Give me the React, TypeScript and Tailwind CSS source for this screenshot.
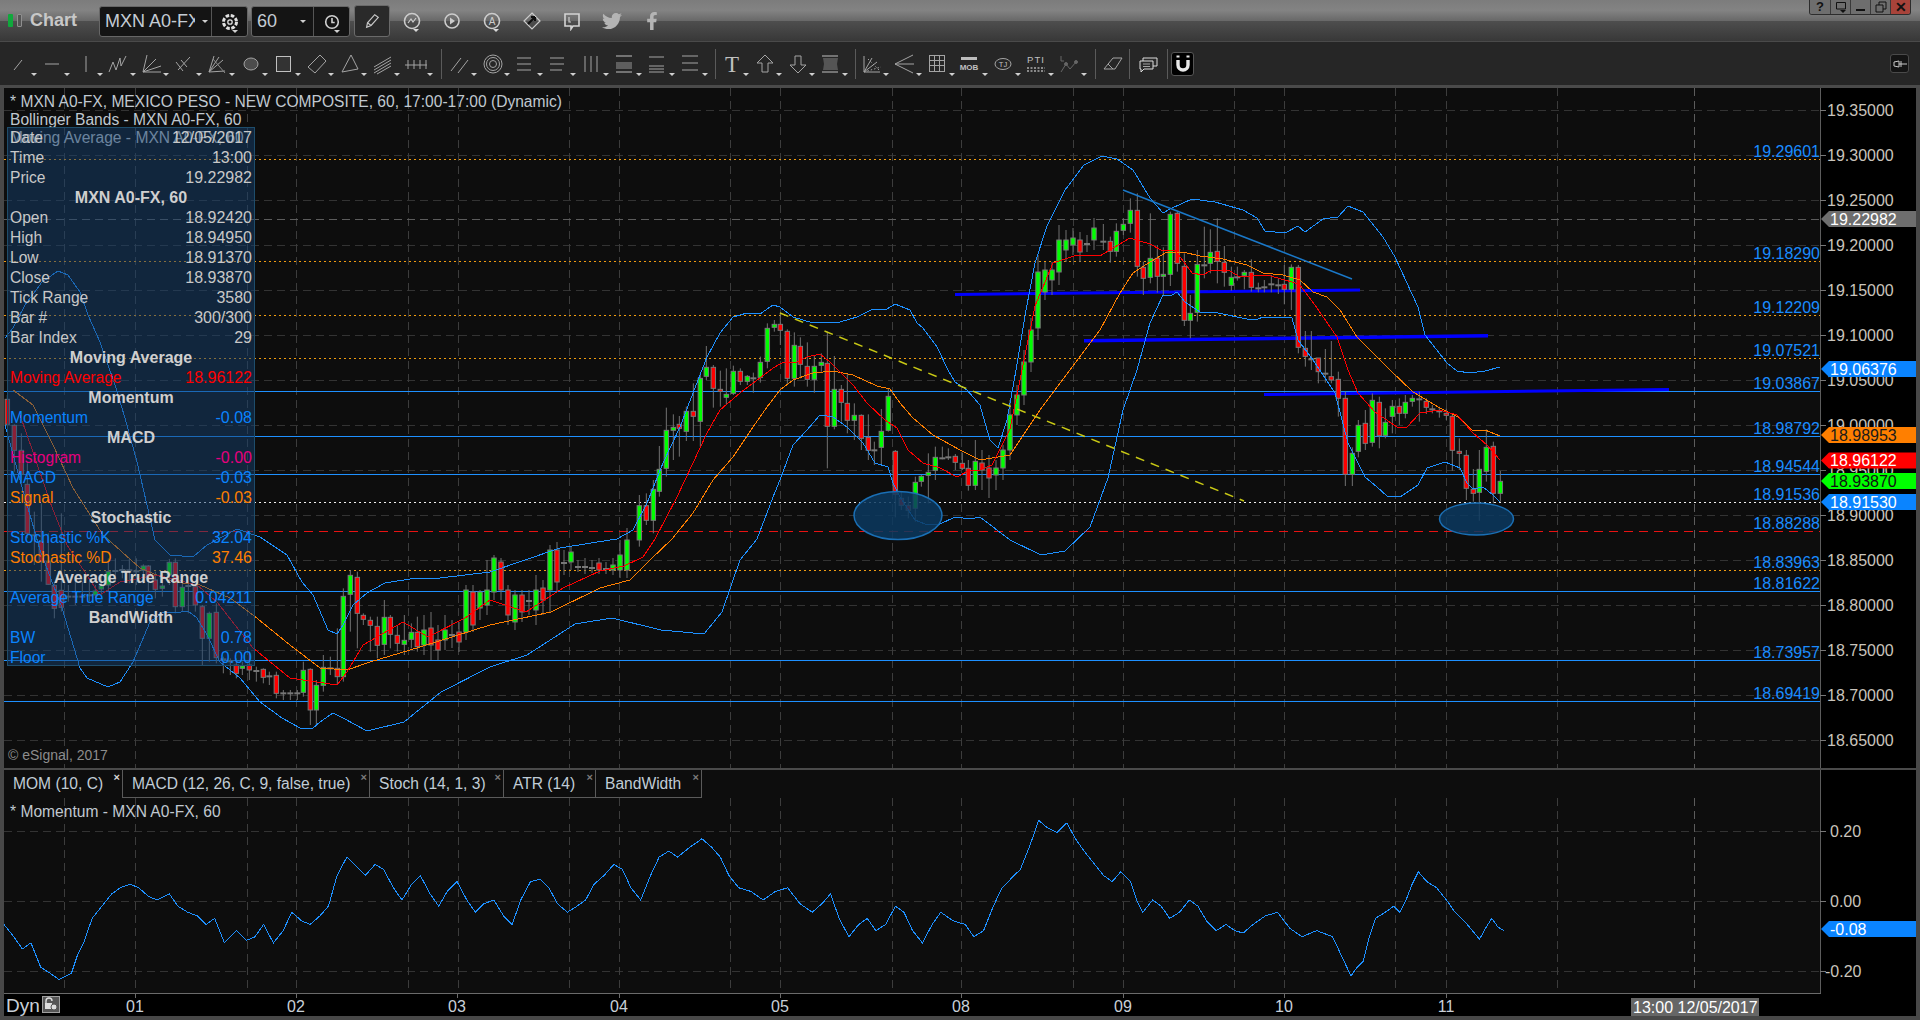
import React from 'react';
import { FaTwitter, FaFacebookF } from 'react-icons/fa';

type Bar = [number, number, number, number, number, string];

// rows are read off zoomed crops, so they get scaled back to page coordinates
const fromCrop = (ox: number, oy: number, rows: Bar[]): Bar[] =>
  rows.map(([x, t, b, wt, wb, k]) => [ox + x / 3, oy + t / 3, oy + b / 3, oy + wt / 3, oy + wb / 3, k]);

const leftBars = fromCrop(0, 385, [
  [22, 43, 118, 30, 125, 'r'], [43, 121, 196, 118, 260, 'r'], [64, 196, 268, 145, 300, 'r'], [82, 298, 445, 235, 460, 'r'],
  [103, 448, 451, 380, 540, 'd'], [124, 470, 530, 355, 590, 'r'], [145, 530, 598, 445, 600, 'r'], [163, 601, 670, 590, 700, 'r'],
  [184, 616, 667, 385, 680, 'r'], [205, 632, 635, 600, 650, 'd'], [226, 632, 635, 590, 660, 'd'], [247, 632, 635, 590, 650, 'd'],
  [268, 628, 631, 590, 650, 'd'], [286, 618, 630, 600, 640, 'g'], [304, 603, 612, 570, 630, 'g'], [325, 560, 600, 520, 620, 'g'],
  [346, 555, 558, 520, 590, 'd'], [367, 552, 555, 540, 580, 'd'], [388, 553, 556, 520, 595, 'd'], [409, 556, 559, 520, 600, 'd'],
  [430, 543, 556, 538, 595, 'g'], [445, 543, 575, 540, 620, 'r'], [466, 585, 613, 560, 640, 'r'], [487, 603, 610, 575, 635, 'g'],
  [508, 532, 570, 522, 600, 'g'], [526, 532, 665, 520, 685, 'r'], [547, 607, 665, 580, 680, 'g'], [565, 600, 603, 590, 685, 'd'],
  [586, 605, 660, 595, 680, 'r'], [607, 665, 760, 660, 840, 'r'], [628, 685, 760, 680, 830, 'g'], [649, 682, 818, 655, 835, 'r'],
  [670, 820, 823, 815, 865, 'd'], [691, 826, 830, 820, 870, 'd'], [709, 840, 865, 820, 880, 'r'], [727, 843, 850, 830, 870, 'g'],
  [748, 840, 855, 800, 885, 'r'], [769, 855, 858, 845, 890, 'd'], [790, 853, 877, 850, 895, 'r'], [808, 871, 874, 860, 900, 'd'],
  [829, 871, 925, 860, 940, 'r'], [850, 922, 925, 915, 945, 'd'], [871, 922, 925, 915, 945, 'd'], [892, 922, 925, 915, 945, 'd'],
  [910, 856, 922, 830, 935, 'g'], [931, 853, 975, 850, 1020, 'r'], [949, 901, 975, 885, 1020, 'g'], [970, 847, 901, 810, 920, 'g'],
  [991, 847, 850, 815, 870, 'd'], [1012, 850, 875, 730, 900, 'r'], [1030, 634, 875, 610, 890, 'g'], [1051, 571, 628, 555, 740, 'g'],
  [1072, 577, 685, 560, 790, 'r'], [1090, 691, 703, 685, 720, 'r'], [1111, 706, 721, 695, 800, 'r'], [1132, 724, 781, 695, 820, 'r'],
  [1153, 697, 778, 645, 810, 'g'], [1171, 697, 748, 690, 790, 'r'], [1192, 751, 775, 720, 800, 'r'], [1213, 766, 778, 690, 810, 'g'],
  [1234, 742, 763, 715, 790, 'g'], [1252, 742, 785, 695, 800, 'r'],
]);

const week1Bars: Bar[] = [
  [424, 630, 645, 615, 655, 'g'], [431, 628, 645, 612, 660, 'r'], [438, 640, 650, 625, 660, 'r'], [445, 630, 640, 615, 650, 'g'],
  [452, 634, 636, 620, 648, 'd'], [459, 632, 642, 622, 652, 'r'], [466, 590, 632, 585, 640, 'g'], [473, 592, 625, 585, 632, 'r'],
  [480, 592, 608, 590, 620, 'g'], [487, 590, 605, 560, 615, 'g'], [494, 558, 592, 555, 600, 'g'], [501, 562, 590, 558, 600, 'r'],
  [508, 590, 615, 585, 625, 'r'], [515, 595, 622, 590, 630, 'g'], [522, 595, 612, 590, 622, 'r'], [529, 600, 602, 590, 615, 'd'],
  [536, 590, 610, 575, 625, 'g'], [543, 588, 600, 580, 615, 'r'], [550, 550, 590, 545, 612, 'g'], [557, 550, 582, 542, 592, 'r'],
  [564, 562, 564, 550, 575, 'd'], [571, 552, 562, 546, 570, 'g'], [578, 566, 568, 560, 572, 'd'], [585, 566, 568, 558, 574, 'd'],
  [592, 567, 569, 560, 573, 'd'], [599, 563, 570, 558, 574, 'r'], [606, 568, 570, 562, 574, 'd'], [613, 565, 570, 558, 575, 'g'],
  [620, 555, 570, 540, 578, 'g'], [627, 540, 570, 528, 578, 'g'],
];

const midBars = fromCrop(560, 300, [
  [238, 617, 720, 585, 740, 'g'], [259, 617, 661, 580, 675, 'r'], [280, 568, 661, 540, 700, 'g'], [298, 508, 574, 438, 590, 'g'],
  [319, 391, 505, 323, 530, 'g'], [340, 382, 391, 343, 480, 'g'], [358, 373, 385, 348, 470, 'r'], [379, 334, 394, 320, 423, 'g'],
  [400, 334, 349, 250, 423, 'r'], [421, 235, 364, 220, 440, 'g'], [439, 202, 229, 138, 240, 'g'], [460, 202, 265, 195, 323, 'r'],
  [481, 268, 274, 212, 320, 'r'], [499, 283, 292, 205, 315, 'g'], [520, 214, 280, 197, 285, 'g'], [541, 214, 244, 205, 255, 'r'],
  [562, 229, 244, 225, 255, 'g'], [580, 232, 235, 218, 278, 'd'], [601, 187, 232, 170, 248, 'g'], [622, 85, 184, 70, 205, 'g'],
  [643, 73, 82, 60, 95, 'g'], [661, 73, 91, 38, 135, 'r'], [682, 94, 235, 88, 255, 'r'], [703, 136, 235, 97, 260, 'g'],
  [721, 139, 193, 112, 235, 'r'], [742, 199, 238, 127, 260, 'r'], [763, 199, 238, 165, 278, 'g'], [784, 187, 196, 160, 215, 'g'],
  [802, 190, 379, 95, 505, 'r'], [823, 268, 379, 168, 388, 'g'], [844, 268, 307, 255, 365, 'r'], [862, 310, 361, 220, 400, 'r'],
  [883, 346, 361, 310, 420, 'g'], [904, 346, 415, 343, 450, 'r'], [925, 412, 451, 343, 480, 'r'], [943, 448, 451, 425, 495, 'd'],
  [964, 394, 442, 327, 495, 'g'], [985, 289, 391, 265, 395, 'g'], [1006, 454, 583, 450, 652, 'r'], [1024, 595, 616, 575, 630, 'r'],
  [1045, 616, 631, 590, 655, 'r'], [1066, 547, 625, 530, 665, 'g'], [1084, 529, 544, 525, 560, 'g'], [1105, 517, 526, 460, 610, 'g'],
  [1126, 472, 511, 440, 540, 'g'], [1147, 472, 475, 440, 478, 'd'], [1165, 469, 472, 445, 480, 'd'], [1186, 469, 487, 462, 510, 'r'],
  [1207, 490, 505, 458, 510, 'r'], [1225, 505, 556, 480, 572, 'r'], [1246, 484, 556, 420, 570, 'g'],
]);

const riseBars: Bar[] = [
  [982, 463, 470, 450, 490, 'r'], [989, 468, 478, 455, 498, 'r'], [996, 468, 475, 460, 490, 'g'], [1003, 450, 468, 445, 480, 'g'],
  [1010, 415, 450, 400, 460, 'g'], [1017, 395, 415, 385, 425, 'g'], [1024, 362, 395, 350, 405, 'g'], [1031, 330, 362, 318, 372, 'g'],
  [1038, 272, 328, 255, 340, 'g'], [1045, 270, 292, 262, 300, 'g'], [1052, 270, 280, 262, 295, 'g'], [1059, 240, 272, 225, 285, 'g'],
  [1066, 240, 250, 230, 262, 'g'], [1073, 238, 245, 228, 255, 'g'], [1080, 240, 252, 232, 262, 'r'], [1087, 243, 245, 235, 252, 'd'],
  [1094, 228, 240, 218, 250, 'g'],
];

const lateBars = fromCrop(1100, 170, [
  [10, 212, 215, 162, 240, 'd'], [31, 214, 244, 200, 278, 'r'], [49, 184, 244, 160, 260, 'g'], [70, 163, 181, 145, 195, 'g'],
  [91, 121, 160, 85, 188, 'g'], [112, 121, 289, 70, 320, 'r'], [130, 292, 325, 275, 375, 'r'], [151, 265, 322, 130, 340, 'g'],
  [172, 265, 319, 225, 368, 'r'], [190, 313, 319, 232, 378, 'g'], [211, 133, 313, 125, 348, 'g'], [232, 130, 280, 125, 305, 'r'],
  [253, 289, 451, 250, 468, 'r'], [271, 430, 451, 375, 505, 'g'], [292, 283, 427, 240, 455, 'g'], [313, 283, 286, 170, 325, 'd'],
  [331, 247, 280, 178, 310, 'g'], [352, 244, 274, 145, 340, 'r'], [373, 277, 307, 228, 350, 'r'], [394, 322, 346, 290, 362, 'g'],
  [412, 319, 321, 290, 332, 'd'], [433, 307, 316, 300, 358, 'g'], [454, 307, 352, 268, 365, 'r'], [475, 352, 355, 338, 367, 'd'],
  [493, 349, 352, 330, 367, 'd'], [514, 340, 343, 315, 367, 'd'], [535, 343, 346, 325, 372, 'd'], [553, 343, 358, 285, 403, 'r'],
  [574, 292, 358, 283, 420, 'g'], [595, 292, 532, 285, 550, 'r'], [616, 535, 559, 483, 590, 'r'], [634, 565, 568, 483, 600, 'd'],
]);

const endBars = fromCrop(1300, 370, [
  [55, -36, 5, -36, 40, 'r'], [76, 8, 11, -63, 38, 'd'], [94, 20, 30, -87, 40, 'r'], [115, 28, 85, 5, 140, 'r'],
  [136, 85, 313, 65, 348, 'r'], [157, 250, 313, 232, 348, 'g'], [175, 166, 244, 150, 262, 'g'], [196, 160, 220, 120, 240, 'r'],
  [217, 91, 217, 70, 230, 'g'], [238, 97, 197, 80, 235, 'r'], [256, 157, 196, 115, 205, 'g'], [277, 109, 139, 90, 190, 'g'],
  [298, 109, 130, 85, 165, 'r'], [316, 97, 130, 75, 145, 'g'], [337, 85, 94, 75, 110, 'g'], [358, 85, 88, 65, 155, 'd'],
  [379, 94, 112, 85, 132, 'r'], [397, 115, 118, 105, 130, 'd'], [418, 121, 124, 110, 143, 'd'], [439, 130, 136, 115, 150, 'r'],
  [457, 139, 241, 130, 302, 'r'], [478, 244, 250, 205, 300, 'r'], [499, 256, 355, 240, 390, 'r'], [520, 358, 370, 297, 395, 'r'],
  [538, 298, 367, 240, 452, 'g'], [559, 232, 304, 178, 335, 'g'], [580, 229, 370, 215, 400, 'r'], [601, 334, 370, 303, 395, 'g'],
]);

const bars = [...leftBars, ...week1Bars, ...midBars, ...riseBars, ...lateBars, ...endBars];

const upperBand = '5,338 13,328 25,305 42,282 58,271 68,275 80,292 88,315 100,342 115,385 125,418 137,462 147,505 155,540 170,555 193,557 207,545 237,529 260,537 287,555 302,582 313,595 328,630 337,634 343,625 353,605 367,593 385,583 410,579 440,578 490,572 560,548 610,540 617,539 633,530 647,503 663,463 680,427 693,393 707,357 720,333 733,317 747,313 760,314 773,305 780,307 793,317 813,323 840,322 857,317 873,309 887,309 895,304 910,310 917,323 923,328 937,347 948,370 955,382 967,390 980,405 990,440 998,448 1007,420 1016,370 1026,310 1035,263 1047,226 1065,190 1084,165 1102,156 1117,159 1133,170 1150,198 1163,213 1172,208 1192,199 1215,202 1243,210 1257,218 1265,231 1285,233 1298,226 1305,232 1323,219 1338,217 1348,206 1363,212 1383,237 1395,257 1418,307 1425,335 1447,363 1457,371 1470,373 1485,371 1500,367';
const lowerBand = '5,425 20,480 40,550 62,608 80,668 87,678 108,687 120,682 133,662 150,622 163,612 175,613 188,611 197,618 207,635 220,662 240,678 260,702 282,718 300,728 312,729 320,722 333,713 343,718 367,731 404,722 441,692 490,667 527,655 575,624 612,618 661,630 704,634 722,612 740,560 757,539 767,513 773,497 780,480 793,445 807,430 820,415 833,417 847,427 863,443 875,463 888,467 893,483 900,497 915,520 925,524 940,524 955,517 970,519 980,517 1010,540 1041,555 1065,551 1090,527 1108,478 1123,410 1137,370 1150,323 1163,295 1172,295 1177,292 1185,302 1200,312 1218,313 1247,319 1258,319 1263,317 1292,318 1298,340 1313,360 1335,393 1342,420 1348,443 1365,477 1377,487 1387,496 1400,497 1418,485 1427,468 1445,462 1460,468 1467,483 1473,489 1483,487 1493,495 1500,502';
const redMa = '20,415 33,452 50,502 67,545 100,595 120,582 157,575 197,585 217,602 253,648 290,678 337,685 347,672 363,645 403,622 428,637 465,618 490,600 526,612 563,588 600,571 624,566 643,557 655,539 677,497 693,463 707,433 720,410 740,393 760,378 773,368 782,363 797,362 807,357 820,354 830,362 843,375 853,385 867,403 885,420 897,428 908,450 923,463 940,468 957,477 970,470 980,470 992,465 1010,429 1035,306 1053,263 1077,255 1100,256 1130,238 1150,244 1163,251 1175,250 1192,273 1203,275 1212,270 1230,271 1240,277 1267,275 1292,282 1300,285 1317,308 1337,337 1348,370 1358,393 1375,412 1397,427 1407,427 1420,413 1440,410 1457,415 1473,433 1487,445 1500,460';
const orangeMa = '13,390 33,405 53,445 73,488 103,535 140,568 173,582 200,585 230,598 253,615 290,645 320,668 347,670 370,662 420,647 490,625 551,612 600,588 630,580 650,560 672,539 693,513 713,480 733,457 753,427 767,407 780,390 793,380 813,373 833,371 853,375 877,386 890,389 900,403 913,418 933,435 960,450 980,460 1010,455 1040,410 1070,370 1100,330 1120,293 1133,273 1150,262 1167,252 1183,252 1200,256 1223,259 1247,265 1263,273 1283,275 1300,280 1313,292 1327,297 1340,310 1357,337 1390,370 1413,392 1440,408 1460,418 1472,430 1485,430 1500,436';

const momentum = [[0,755],[8,765],[15,775],[22,770],[30,790],[38,795],[45,800],[55,795],[60,780],[65,770],[72,750],[80,740],[88,730],[95,725],[103,722],[110,725],[118,732],[125,735],[135,730],[142,740],[150,745],[158,748],[165,755],[172,750],[180,770],[190,760],[198,768],[205,765],[212,755],[220,770],[228,760],[235,745],[243,752],[250,755],[258,748],[265,740],[272,715],[280,700],[288,708],[295,715],[303,706],[310,710],[318,725],[325,735],[333,722],[340,715],[348,730],[355,740],[362,728],[370,720],[378,735],[385,745],[392,738],[400,735],[408,748],[415,755],[422,735],[430,720],[438,718],[445,725],[452,738],[460,745],[468,740],[475,735],[482,722],[490,715],[498,706],[505,710],[512,725],[520,735],[528,715],[535,700],[543,695],[550,700],[560,692],[570,685],[578,692],[585,700],[592,715],[600,725],[610,728],[620,735],[630,728],[640,725],[650,738],[660,745],[668,738],[675,730],[682,750],[690,765],[698,755],[705,750],[712,760],[720,755],[728,740],[735,745],[742,760],[750,770],[758,755],[765,745],[775,752],[785,755],[792,765],[800,760],[808,740],[815,725],[822,718],[830,710],[838,690],[845,670],[852,676],[860,680],[868,672],[875,685],[882,695],[890,705],[898,715],[905,720],[912,712],[920,720],[925,735],[930,745],[938,735],[945,740],[952,750],[960,745],[968,735],[975,740],[982,752],[990,760],[998,755],[1005,760],[1012,762],[1020,755],[1030,748],[1040,745],[1050,758],[1060,765],[1072,760],[1085,765],[1092,780],[1100,797],[1105,790],[1110,785],[1115,765],[1120,750],[1128,745],[1135,740],[1140,745],[1145,735],[1150,722],[1155,712],[1162,720],[1170,725],[1178,735],[1185,745],[1195,755],[1205,767],[1210,758],[1215,750],[1220,757],[1225,760]]
  .map(([x, y]) => `${4 + x * 1.2245},${y * 1.2245}`)
  .join(' ');

const gridX = [64, 135, 247, 296, 408, 458, 569, 619, 730, 780, 892, 961, 1073, 1123, 1234, 1284, 1395, 1446, 1557];
const gridY = [110, 155, 200, 245, 290, 335, 380, 425, 470, 515, 560, 605, 650, 695, 740];
const axisPrices = ['19.35000', '19.30000', '19.25000', '19.20000', '19.15000', '19.10000', '19.05000', '19.00000', '18.95000', '18.90000', '18.85000', '18.80000', '18.75000', '18.70000', '18.65000'];

const levels = [
  { y: 159.5, label: '19.29601', kind: 'orange' },
  { y: 261.5, label: '19.18290', kind: 'orange' },
  { y: 315.5, label: '19.12209', kind: 'orange' },
  { y: 358.5, label: '19.07521', kind: 'orange' },
  { y: 391.5, label: '19.03867', kind: 'blue' },
  { y: 436.5, label: '18.98792', kind: 'blue' },
  { y: 474.5, label: '18.94544', kind: 'blue' },
  { y: 502.5, label: '18.91536', kind: 'white' },
  { y: 531.5, label: '18.88288', kind: 'red' },
  { y: 570.5, label: '18.83963', kind: 'orange' },
  { y: 591.5, label: '18.81622', kind: 'blue' },
  { y: 660.5, label: '18.73957', kind: 'blue' },
  { y: 701.5, label: '18.69419', kind: 'blue' },
];

const levelStyle: Record<string, { stroke: string; dash?: string }> = {
  orange: { stroke: '#f09c10', dash: '2 3' },
  blue: { stroke: '#1e90ff' },
  white: { stroke: '#f0f0f0', dash: '2 3' },
  red: { stroke: '#e81212', dash: '9 6' },
};

const tags = [
  { y: 219, label: '19.22982', bg: '#6e6e6e', fg: '#ffffff' },
  { y: 369, label: '19.06376', bg: '#0a84ff', fg: '#ffffff' },
  { y: 435, label: '18.98953', bg: '#ff7f00', fg: '#1a1a1a' },
  { y: 460.5, label: '18.96122', bg: '#ff0000', fg: '#ffffff' },
  { y: 481, label: '18.93870', bg: '#00ff00', fg: '#111111' },
  { y: 502, label: '18.91530', bg: '#0a84ff', fg: '#ffffff' },
];

const days = [
  { x: 135, label: '01' }, { x: 296, label: '02' }, { x: 457, label: '03' }, { x: 619, label: '04' }, { x: 780, label: '05' },
  { x: 961, label: '08' }, { x: 1123, label: '09' }, { x: 1284, label: '10' }, { x: 1446, label: '11' },
];

type InfoRow = { head?: string; label?: string; value?: string; color?: string };
const infoRows: InfoRow[] = [
  { label: 'Date', value: '12/05/2017' },
  { label: 'Time', value: '13:00' },
  { label: 'Price', value: '19.22982' },
  { head: 'MXN A0-FX, 60' },
  { label: 'Open', value: '18.92420' },
  { label: 'High', value: '18.94950' },
  { label: 'Low', value: '18.91370' },
  { label: 'Close', value: '18.93870' },
  { label: 'Tick Range', value: '3580' },
  { label: 'Bar #', value: '300/300' },
  { label: 'Bar Index', value: '29' },
  { head: 'Moving Average' },
  { label: 'Moving Average', value: '18.96122', color: 'text-[#ff0000]' },
  { head: 'Momentum' },
  { label: 'Momentum', value: '-0.08', color: 'text-[#0a84ff]' },
  { head: 'MACD' },
  { label: 'Histogram', value: '-0.00', color: 'text-[#e6007e]' },
  { label: 'MACD', value: '-0.03', color: 'text-[#0a84ff]' },
  { label: 'Signal', value: '-0.03', color: 'text-[#ff7f00]' },
  { head: 'Stochastic' },
  { label: 'Stochastic %K', value: '32.04', color: 'text-[#0a84ff]' },
  { label: 'Stochastic %D', value: '37.46', color: 'text-[#ff7f00]' },
  { head: 'Average True Range' },
  { label: 'Average True Range', value: '0.04211', color: 'text-[#0a84ff]' },
  { head: 'BandWidth' },
  { label: 'BW', value: '0.78', color: 'text-[#0a84ff]' },
  { label: 'Floor', value: '0.00', color: 'text-[#0a84ff]' },
];

const tabs = [
  { label: 'MOM (10, C)', w: 'w-[119px]', active: true },
  { label: 'MACD (12, 26, C, 9, false, true)', w: 'w-[247px]' },
  { label: 'Stoch (14, 1, 3)', w: 'w-[134px]' },
  { label: 'ATR (14)', w: 'w-[92px]' },
  { label: 'BandWidth', w: 'w-[106px]' },
];

const Caret = () => (
  <span className="absolute bottom-[9px] right-[3px] h-0 w-0 border-x-[3px] border-t-[3px] border-x-transparent border-t-[#d0d0d0]" />
);

const Ico: React.FC<{ children: React.ReactNode }> = ({ children }) => (
  <svg viewBox="0 0 26 26" className="h-[26px] w-[26px]" fill="none" stroke="#a4a4a4" strokeWidth="1">
    {children}
  </svg>
);

const Tool: React.FC<{ children: React.ReactNode }> = ({ children }) => (
  <div className="relative flex h-[42px] w-[33px] shrink-0 items-center">
    <Ico>{children}</Ico>
    <Caret />
  </div>
);

const Sep: React.FC<{ w: string }> = ({ w }) => (
  <div className={`flex h-[30px] shrink-0 justify-center ${w}`}>
    <div className="h-full w-px bg-[#5a5a5a]" />
  </div>
);

const group1 = [
  <path key="a" d="M7 19 15 9" />,
  <path key="a" d="M5 13H19" />,
  <path key="a" d="M13 5V21" />,
  <path key="a" d="M3 21 7 11 10 19 14 7 15 15 20 5" />,
  <path key="a" d="M4 21 8 4M4 21 17 8M4 21 22 15M4 21H22" />,
  <path key="a" d="M6 19 18 6M4 11 11 20M9 9 15 16" />,
  <g key="a"><path d="M4 21 9 5M4 21 20 20M4 21 18 9M4 21 14 6" /><path d="M8 8 20 22" stroke="#8a8a8a" /></g>,
  <ellipse key="a" cx="13" cy="13" rx="7" ry="6" fill="#4c4c4c" />,
  <rect key="a" x="5.5" y="5.5" width="14" height="15" fill="#333333" stroke="#c0c0c0" />,
  <path key="a" d="M16 4 22 10 11 22 4 16Z" />,
  <path key="a" d="M14 4 5 21 21 18Z" />,
  <path key="a" d="M4 16 21 6M4 19 21 9M4 22 21 12M7 23 21 15" />,
  <path key="a" d="M2 14H24M5 9V18M11 9V18M17 9V18M23 9V18" />,
];

const group2 = [
  <path key="a" d="M4 20 14 7M11 22 21 9" />,
  <g key="a"><circle cx="13" cy="13" r="9" /><circle cx="13" cy="13" r="6.5" /><circle cx="13" cy="13" r="3.5" /></g>,
  <path key="a" d="M4 7H18M4 13H18M4 19H18" />,
  <path key="a" d="M4 7H18M4 13H18M4 19H16" />,
  <path key="a" d="M6 5V21M12 5V21M18 5V21" />,
  <g key="a"><path d="M4 5H20M4 21H20" stroke="#c0c0c0" /><rect x="4" y="11" width="16" height="7" fill="#5e5e5e" stroke="none" /></g>,
  <path key="a" d="M4 6H19M4 15H19M4 18H19M4 21H19" />,
  <path key="a" d="M4 5H20M4 12H20M4 19H20" strokeWidth="1.2" />,
];

const group3 = [
  <text key="a" x="13" y="21" textAnchor="middle" fontFamily="'Liberation Serif',serif" fontSize="23" fill="#c0c0c0" stroke="none">T</text>,
  <path key="a" d="M13 4 21 12H16V21H10V12H5Z" />,
  <path key="a" d="M13 22 21 14H16V5H10V14H5Z" />,
  <g key="a"><path d="M4 5H20M4 21H20" stroke="#c0c0c0" /><path d="M5 7H20L19 13 20 19H5L6 13Z" fill="#555555" stroke="none" /></g>,
];

const group4 = [
  <g key="a"><path d="M5 5V21H21M5 21 13 7M5 21 18 11" /><path d="M5 21 22 16M9 8 20 19" strokeDasharray="1.5 2" /></g>,
  <path key="a" d="M3 13 21 4M3 13H22M3 13 21 22" />,
  <g key="a"><rect x="4.5" y="4.5" width="15" height="16" /><path d="M4.5 9.5H19.5M4.5 14.5H19.5M9.5 4.5V20.5M14.5 4.5V20.5" /></g>,
  <g key="a"><rect x="3" y="6" width="16" height="3" fill="#bdbdbd" stroke="none" /><text x="11" y="19" textAnchor="middle" fontSize="8" fontWeight="700" fill="#c0c0c0" stroke="none">MOB</text></g>,
  <g key="a"><ellipse cx="12" cy="13" rx="8" ry="5.5" /><text x="12" y="16" textAnchor="middle" fontSize="7.5" fill="#c0c0c0" stroke="none">TJ</text></g>,
  <g key="a"><text x="12" y="12" textAnchor="middle" fontSize="9.5" letterSpacing="1" fill="#c0c0c0" stroke="none">PTI</text><path d="M3 17H21M3 20H21" strokeDasharray="2 1.5" strokeWidth="2" stroke="#8a8a8a" /></g>,
  <g key="a" stroke="#666"><path d="M4 5V10H7" /><path d="M4 21 9 13 13 18 19 11" /><circle cx="19" cy="11" r="1.5" fill="#666" /><circle cx="9" cy="13" r="1.5" fill="#666" /></g>,
];

const TitleIcon: React.FC<{ children: React.ReactNode; caret?: boolean }> = ({ children, caret }) => (
  <div className="relative flex h-[28px] w-[40px] items-center justify-center">
    <svg viewBox="0 0 20 20" className="h-[20px] w-[20px]" fill="none" stroke="#cccccc" strokeWidth="1.6">
      {children}
    </svg>
    {caret && <span className="absolute bottom-[3px] left-[21px] h-0 w-0 border-x-[3px] border-t-[3px] border-x-transparent border-t-[#d8d8d8]" />}
  </div>
);

const Candles = () => (
  <g>
    {bars.map(([x, t, b, wt, wb, k], i) => (
      <g key={i}>
        <line x1={x} x2={x} y1={wt} y2={wb} stroke="#717171" strokeWidth="1" />
        {k === 'd' ? (
          <rect x={x - 3} y={t} width="6" height={Math.max(2, b - t)} fill="#777777" />
        ) : (
          <rect x={x - 2.2} y={t} width="4.4" height={b - t} fill={k === 'g' ? '#00ff00' : '#ff0000'} stroke="#787878" strokeWidth="1" />
        )}
      </g>
    ))}
  </g>
);

const Tag: React.FC<{ y: number; label: string; bg: string; fg: string }> = ({ y, label, bg, fg }) => (
  <g>
    <polygon points={`1821,${y} 1829,${y - 8} 1916,${y - 8} 1916,${y + 8} 1829,${y + 8}`} fill={bg} />
    <text x="1830" y={y + 5.5} fontSize="16" fill={fg}>{label}</text>
  </g>
);

const UpperChart = () => (
  <svg viewBox="4 88 1912 680" className="block h-[680px] w-[1912px]">
    <rect x="4" y="88" width="1816" height="680" fill="#0d0d0d" />
    <rect x="1820.5" y="88" width="96" height="680" fill="#000000" />
    <g stroke="#333333" strokeDasharray="8 5" shapeRendering="crispEdges">
      {gridY.map((y) => <line key={y} x1="4" x2="1820" y1={y + 0.5} y2={y + 0.5} />)}
      {gridX.map((x) => <line key={x} x1={x + 0.5} x2={x + 0.5} y1="88" y2="768" stroke="#3c3c3c" />)}
    </g>
    <g stroke="#5c5c5c" strokeDasharray="8 5" shapeRendering="crispEdges">
      <line x1="4" x2="1820" y1="219.5" y2="219.5" />
      <line x1="1694.5" x2="1694.5" y1="88" y2="768" />
    </g>
    {levels.map((l) => (
      <line key={l.label} x1="4" x2="1820" y1={l.y} y2={l.y} stroke={levelStyle[l.kind].stroke} strokeDasharray={levelStyle[l.kind].dash} strokeWidth="1" shapeRendering="crispEdges" />
    ))}
    <g fill="#0000ff">
      <polygon points="955,293 1360,288.5 1360,291.5 955,296" />
      <polygon points="1084,339 1488,334 1488,337.5 1084,342.5" />
      <polygon points="1264,393 1669,388 1669,391 1264,396" />
    </g>
    <Candles />
    <g fill="none" strokeWidth="1" shapeRendering="crispEdges">
      <polyline points={upperBand} stroke="#1e90ff" />
      <polyline points={lowerBand} stroke="#1e90ff" />
      <polyline points={orangeMa} stroke="#ff7f00" />
      <polyline points={redMa} stroke="#ff0000" />
    </g>
    <line x1="1123" y1="190" x2="1352" y2="279" stroke="#1a78c8" strokeWidth="1.5" />
    <line x1="780" y1="313" x2="1244" y2="501" stroke="#c8c814" strokeWidth="1.5" strokeDasharray="9 7" />
    <ellipse cx="898" cy="515.5" rx="44" ry="24" fill="#0c3a60" fillOpacity="0.85" stroke="#1a6fb5" strokeWidth="1.5" />
    <ellipse cx="1476.5" cy="519" rx="37" ry="16" fill="#0c3a60" fillOpacity="0.85" stroke="#1a6fb5" strokeWidth="1.5" />
    <line x1="1820.5" x2="1820.5" y1="88" y2="768" stroke="#5c5c5c" />
    {levels.map((l) => (
      <text key={l.label} x="1820" y={l.y - 2.5} textAnchor="end" fontSize="16" fill="#1a8cff">{l.label}</text>
    ))}
    {axisPrices.map((p, i) => (
      <g key={p}>
        <line x1="1820" x2="1826" y1={gridY[i] + 0.5} y2={gridY[i] + 0.5} stroke="#777777" />
        <text x="1827" y={gridY[i] + 6} fontSize="16" fill="#c9c4bc">{p}</text>
      </g>
    ))}
    {tags.map((t) => <Tag key={t.label} {...t} />)}
  </svg>
);

const LowerChart = () => (
  <svg viewBox="4 798 1912 195" className="block h-[195px] w-[1912px]">
    <rect x="4" y="798" width="1816" height="195" fill="#0d0d0d" />
    <rect x="1820.5" y="798" width="96" height="195" fill="#000000" />
    <g stroke="#333333" strokeDasharray="8 5" shapeRendering="crispEdges">
      {[831, 901, 971].map((y) => <line key={y} x1="4" x2="1820" y1={y + 0.5} y2={y + 0.5} />)}
      {gridX.map((x) => <line key={x} x1={x + 0.5} x2={x + 0.5} y1="798" y2="993" stroke="#3c3c3c" />)}
    </g>
    <line x1="1694.5" x2="1694.5" y1="798" y2="993" stroke="#5c5c5c" strokeDasharray="8 5" />
    <polyline points={momentum} fill="none" stroke="#1e90ff" strokeWidth="1" shapeRendering="crispEdges" />
    <line x1="1820.5" x2="1820.5" y1="798" y2="993" stroke="#5c5c5c" />
    {[{ y: 831, t: '0.20' }, { y: 901, t: '0.00' }, { y: 971, t: '-0.20' }].map((a) => (
      <g key={a.t}>
        <line x1="1820" x2="1826" y1={a.y + 0.5} y2={a.y + 0.5} stroke="#777777" />
        <text x={a.y === 971 ? 1825 : 1830} y={a.y + 6} fontSize="16" fill="#c9c4bc">{a.t}</text>
      </g>
    ))}
    <Tag y={929} label="-0.08" bg="#0a84ff" fg="#ffffff" />
  </svg>
);

const TimeAxis = () => (
  <svg viewBox="4 993 1912 23" className="block h-[23px] w-[1912px]">
    <rect x="4" y="993" width="1912" height="23" fill="#000000" />
    <line x1="4" x2="1821" y1="993.5" y2="993.5" stroke="#6a6a6a" />
    <text x="6" y="1012" fontSize="19" fill="#c9d0d8">Dyn</text>
    <rect x="42.5" y="996.5" width="17" height="16" fill="#555555" stroke="#a0a0a0" />
    <path d="M46 1003v-2a3 3 0 0 1 6 0" fill="none" stroke="#dddddd" strokeWidth="1.4" />
    <rect x="45" y="1003" width="7" height="6" fill="#dddddd" />
    <circle cx="54" cy="1007" r="3" fill="#dddddd" stroke="#555555" />
    {days.map((d) => (
      <g key={d.label}>
        <line x1={d.x + 0.5} x2={d.x + 0.5} y1="993" y2="998" stroke="#6a6a6a" />
        <text x={d.x} y="1012" textAnchor="middle" fontSize="16" fill="#c9d0d8">{d.label}</text>
      </g>
    ))}
    <rect x="1631" y="998" width="128" height="18" fill="#666666" />
    <text x="1633" y="1013" fontSize="16" fill="#ffffff">13:00 12/05/2017</text>
  </svg>
);

export default function App() {
  return (
    <div className="h-[1020px] w-[1920px] overflow-hidden bg-[#484848] font-['Liberation_Sans',Arial,sans-serif]">
      {/* window title bar */}
      <div className="flex h-[41px] items-start bg-[linear-gradient(#7c7c7c,#838383_25%,#696969_50%,#4e4e4e_51%,#383838)]">
        <div className="flex h-full w-[99px] shrink-0 items-center pl-[8px]">
          <span className="h-[13px] w-[5px] rounded-[1px] bg-[#10a83c]" />
          <span className="ml-[4px] h-[13px] w-[5px] rounded-[1px] border border-[#8f8f8f] bg-[#555555]" />
          <span className="ml-[8px] text-[18px] font-bold text-[#c8c8c8]">Chart</span>
        </div>
        <div className="mt-[6px] flex h-[31px] w-[149px] overflow-hidden rounded-[3px] border border-[#666666] bg-[#141414]">
          <div className="flex w-[111px] items-center pl-[5px]">
            <span className="w-[90px] overflow-hidden whitespace-nowrap text-[18px] text-[#c4ccd4]">MXN A0-FX</span>
            <span className="ml-[7px] h-0 w-0 border-x-[3px] border-t-[3px] border-x-transparent border-t-[#d0d0d0]" />
          </div>
          <div className="relative flex flex-1 items-center justify-center border-l border-[#555555]">
            <svg viewBox="0 0 20 20" className="h-[20px] w-[20px]" fill="none" stroke="#e0e0e0">
              <circle cx="10" cy="10" r="6.5" strokeWidth="3" strokeDasharray="3.5 1.6" />
              <circle cx="10" cy="10" r="2.2" strokeWidth="1.3" />
            </svg>
            <span className="absolute bottom-[3px] right-[9px] h-0 w-0 border-x-[3px] border-t-[3px] border-x-transparent border-t-[#d0d0d0]" />
          </div>
        </div>
        <div className="ml-[3px] mt-[6px] flex h-[31px] w-[99px] overflow-hidden rounded-[3px] border border-[#666666] bg-[#141414]">
          <div className="flex w-[61px] items-center pl-[5px]">
            <span className="w-[43px] text-[18px] text-[#c4ccd4]">60</span>
            <span className="h-0 w-0 border-x-[3px] border-t-[3px] border-x-transparent border-t-[#d0d0d0]" />
          </div>
          <div className="relative flex flex-1 items-center justify-center border-l border-[#555555]">
            <svg viewBox="0 0 20 20" className="h-[18px] w-[18px]" fill="none" stroke="#d0d0d0" strokeWidth="1.8">
              <circle cx="10" cy="10" r="7" />
              <path d="M10 5.5V10.5H13" />
            </svg>
            <span className="absolute bottom-[3px] right-[9px] h-0 w-0 border-x-[3px] border-t-[3px] border-x-transparent border-t-[#d0d0d0]" />
          </div>
        </div>
        <div className="ml-[4px] mt-[5px] flex h-[32px] w-[36px] items-center justify-center rounded-[3px] border border-[#6a6a6a] bg-[#2a2a2a]">
          <svg viewBox="0 0 20 20" className="h-[18px] w-[18px]" fill="none" stroke="#c8c8c8" strokeWidth="1.3">
            <path d="M4 17 5 12 13 3 17 6 9 15Z" />
            <path d="M5 12 9 15" />
          </svg>
        </div>
        <div className="ml-[2px] mt-[7px] flex">
          <TitleIcon caret><circle cx="10" cy="10" r="7.5" /><path d="M6 12 9 8 11 11 14 7" strokeWidth="1.2" /></TitleIcon>
          <TitleIcon><circle cx="10" cy="10" r="7" /><path d="M8 6.5 13 10 8 13.5Z" fill="#cccccc" stroke="none" /></TitleIcon>
          <TitleIcon caret>
            <circle cx="10" cy="10" r="7.5" />
            <text x="10" y="13.5" textAnchor="middle" fontSize="10" fill="#cccccc" stroke="none">A</text>
          </TitleIcon>
          <TitleIcon>
            <path d="M10 2 18 10 10 18 2 10Z" strokeWidth="1.2" />
            <path d="M6 13 13 6M13 6V10M13 6H9" stroke="#101010" strokeWidth="2.2" />
          </TitleIcon>
          <TitleIcon><path d="M3 3H17V15H11L9 18V15H3Z" stroke="#d4d4d4" /><path d="M7 6V11H9" strokeWidth="1.2" /></TitleIcon>
          <div className="flex h-[28px] w-[40px] items-center justify-center text-[20px] text-[#b4b4b4]"><FaTwitter /></div>
          <div className="flex h-[28px] w-[40px] items-center justify-center text-[18px] text-[#b4b4b4]"><FaFacebookF /></div>
        </div>
        <div className="ml-auto mr-[9px] flex h-[15px] overflow-hidden rounded-b-[3px] border border-t-0 border-[#2c2c2c] text-[#111111]">
          <div className="flex w-[20px] items-center justify-center bg-[#6e6e6e] text-[13px] font-bold">?</div>
          <div className="flex w-[20px] items-center justify-center border-l border-[#3a3a3a] bg-[#6e6e6e]">
            <svg viewBox="0 0 12 12" className="h-[12px] w-[12px]" fill="none" stroke="#111111"><path d="M1.5 1.5H10.5V8H1.5Z" /><path d="M5 9H11L8 12Z" fill="#111111" stroke="none" /></svg>
          </div>
          <div className="flex w-[20px] items-end justify-center border-l border-[#3a3a3a] bg-[#6e6e6e] pb-[3px]"><span className="h-[2px] w-[9px] bg-[#111111]" /></div>
          <div className="flex w-[20px] items-center justify-center border-l border-[#3a3a3a] bg-[#6e6e6e]">
            <svg viewBox="0 0 12 12" className="h-[12px] w-[12px]" fill="none" stroke="#111111"><path d="M1 4H8V11H1Z" /><path d="M4 4V1H11V8H8" /></svg>
          </div>
          <div className="flex w-[20px] items-center justify-center border-l border-[#3a3a3a] bg-[#a8433a] text-[14px] font-bold">✕</div>
        </div>
      </div>

      {/* drawing tools */}
      <div className="flex h-[44px] items-center border-t border-[#4a4a4a] bg-[#262626] pl-[7px] pr-[11px]">
        {group1.map((icon, i) => <Tool key={i}>{icon}</Tool>)}
        <Sep w="w-[11px]" />
        {group2.map((icon, i) => <Tool key={i}>{icon}</Tool>)}
        <Sep w="w-[8px]" />
        {group3.map((icon, i) => <Tool key={i}>{icon}</Tool>)}
        <Sep w="w-[8px]" />
        {group4.map((icon, i) => <Tool key={i}>{icon}</Tool>)}
        <Sep w="w-[10px]" />
        <div className="flex w-[26px] shrink-0 items-center justify-center">
          <Ico><path d="M4 18 13 7H22L15 18Z" /><path d="M8 13 13 18" /></Ico>
        </div>
        <Sep w="w-[6px]" />
        <div className="flex w-[32px] shrink-0 items-center justify-center">
          <Ico><path d="M8 7H22V15H8Z" fill="#2a2a2a" stroke="#dcdcdc" /><path d="M5 10H18V18H9L6 21V18H5Z" fill="#2a2a2a" stroke="#dcdcdc" /><path d="M8 13H15M8 15.5H15" /></Ico>
        </div>
        <Sep w="w-[7px]" />
        <div className="flex h-[24px] w-[23px] shrink-0 items-center justify-center rounded-[3px] border border-[#555555] bg-black">
          <svg viewBox="0 0 20 20" className="h-[20px] w-[20px]" fill="none" stroke="#e8e8e8">
            <path d="M5 6V11A5 5 0 0 0 15 11V6" strokeWidth="3.4" />
            <path d="M3.5 2.5H6.5M13.5 2.5H16.5" strokeWidth="2" />
          </svg>
        </div>
        <div className="ml-auto flex h-[19px] w-[19px] items-center justify-center rounded-[3px] border border-[#4a4a4a] bg-[#141414]">
          <svg viewBox="0 0 16 16" className="h-[16px] w-[16px]" fill="none" stroke="#c8c8c8"><path d="M2 6 7 5V11L2 10ZM7 8H15" /><path d="M9 5V11" /></svg>
        </div>
      </div>

      <div className="h-[3px] bg-[#4a4a4a]" />

      <div className="flex flex-col pl-[4px]">
        <div className="relative h-[680px] w-[1912px]">
          <UpperChart />
          <div className="absolute left-[6px] top-[5px] text-[15.6px] leading-[18px] text-[#c0c8d0]">
            <p>* MXN A0-FX, MEXICO PESO - NEW COMPOSITE, 60, 17:00-17:00 (Dynamic)</p>
            <p>Bollinger Bands - MXN A0-FX, 60</p>
            <p>Moving Average - MXN A0-FX, 60</p>
          </div>
          <div className="absolute left-[3px] top-[39px] h-[539px] w-[248px] overflow-hidden border border-[#1e4d6b] bg-[#153f6d]/50 pl-[2px] pr-[2px] text-[16px] leading-[20px] text-[#c8c8c8]">
            {infoRows.map((row, i) =>
              row.head ? (
                <div key={i} className="h-[20px] text-center font-bold text-[#cfcfcf]">{row.head}</div>
              ) : (
                <div key={i} className={`flex h-[20px] justify-between ${row.color ?? ''}`}>
                  <span className="text-[15.6px]">{row.label}</span>
                  <span>{row.value}</span>
                </div>
              )
            )}
          </div>
          <span className="absolute bottom-[2px] left-[4px] text-[14px] text-[#8c8c8c]">© eSignal, 2017</span>
        </div>

        <div className="flex h-[30px] w-[1912px] border-t-2 border-[#4a4a4a] bg-black">
          <div className="flex w-[1816px] bg-[#0d0d0d]">
            {tabs.map((tab) => (
              <div key={tab.label} className={`relative flex items-center whitespace-nowrap border-r border-[#5a5a5a] pl-[9px] text-[15.6px] text-[#c0ccd6] ${tab.w} ${tab.active ? '' : 'border-b'}`}>
                {tab.label}
                <span className={`absolute right-[2px] top-0 text-[11px] font-bold leading-[14px] ${tab.active ? 'text-[#d8d8d8]' : 'text-[#7c7c7c]'}`}>×</span>
              </div>
            ))}
            <div className="flex-1" />
          </div>
          <div className="w-[96px] border-l border-[#5c5c5c]" />
        </div>

        <div className="relative h-[195px] w-[1912px]">
          <LowerChart />
          <span className="absolute left-[6px] top-[5px] text-[15.6px] leading-[18px] text-[#c0c8d0]">* Momentum - MXN A0-FX, 60</span>
        </div>

        <TimeAxis />
      </div>
    </div>
  );
}
